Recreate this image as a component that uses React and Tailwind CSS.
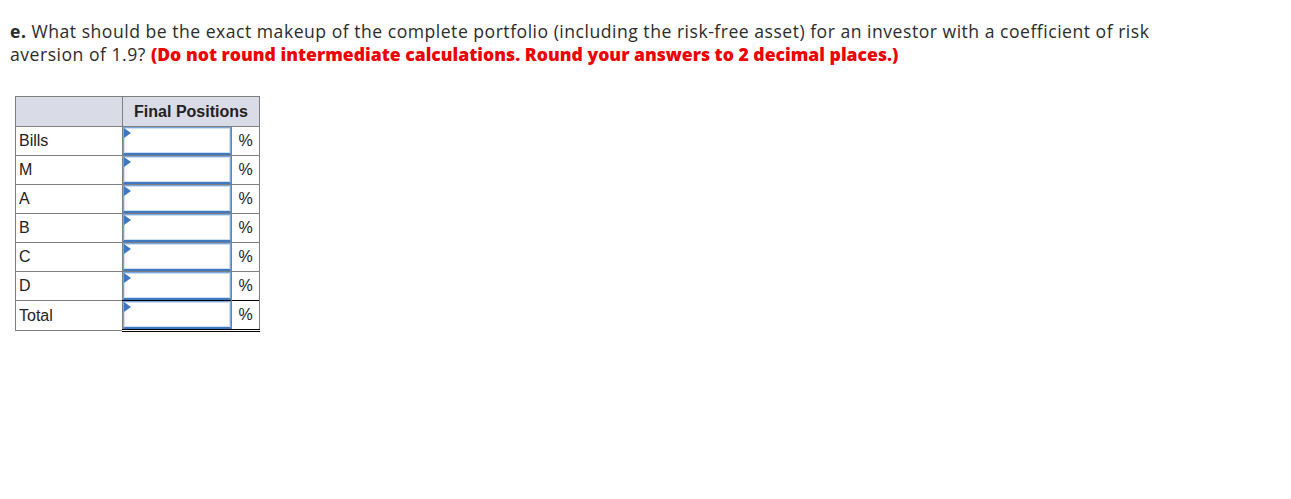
const rows = ['Bills', 'M', 'A', 'B', 'C', 'D', 'Total']

function AnswerInput() {
  return (
    <div className="relative h-[28px] w-full border border-[#7aa7dc] border-b-2 border-b-[#3f78c2] bg-white shadow-[inset_0_0_0_1px_#cfe0f4]">
      <span className="absolute left-0 top-0 h-0 w-0 border-y-[5px] border-l-[7px] border-y-transparent border-l-[#3f78c2]" />
    </div>
  )
}

export default function App() {
  return (
    <div className="min-h-[499px] bg-white pl-[10px] pt-[20px] font-['Open_Sans','Liberation_Sans',sans-serif]">
      <p className="max-w-[1160px] text-[17.6px] leading-[23px] tracking-[0.5px] text-[#2b2b2b]">
        <b className="font-bold">e.</b> What should be the exact makeup of the complete portfolio (including the risk-free asset) for an investor with a coefficient of risk aversion of 1.9?{' '}
        <b className="font-extrabold tracking-normal text-[#ee0000]">(Do not round intermediate calculations. Round your answers to 2 decimal places.)</b>
      </p>

      <table className="ml-[5px] mt-[30px] border-collapse font-['Liberation_Sans',Arial,sans-serif] text-[16px] text-[#222]">
        <thead>
          <tr className="h-[30px] bg-[#d9dce6]">
            <th className="w-[107px] border border-[#7f7f7f]" />
            <th colSpan={2} className="border border-[#7f7f7f] px-2 text-center font-bold text-[#222]">Final Positions</th>
          </tr>
        </thead>
        <tbody>
          {rows.map((r) => {
            const last = r === 'Total'
            return (
              <tr key={r} className={last ? 'h-[28px]' : 'h-[29px]'}>
                <td className="border border-[#7f7f7f] px-[3px] align-middle">{r}</td>
                <td
                  className={`w-[109px] border border-[#7f7f7f] p-0 ${last ? 'border-t-black border-b-[3px] border-b-black border-double' : ''}`}
                >
                  <AnswerInput />
                </td>
                <td
                  className={`w-[28px] border border-[#7f7f7f] px-[3px] text-center ${last ? 'border-t-black border-b-[3px] border-b-black border-double' : ''}`}
                >
                  %
                </td>
              </tr>
            )
          })}
        </tbody>
      </table>
    </div>
  )
}
